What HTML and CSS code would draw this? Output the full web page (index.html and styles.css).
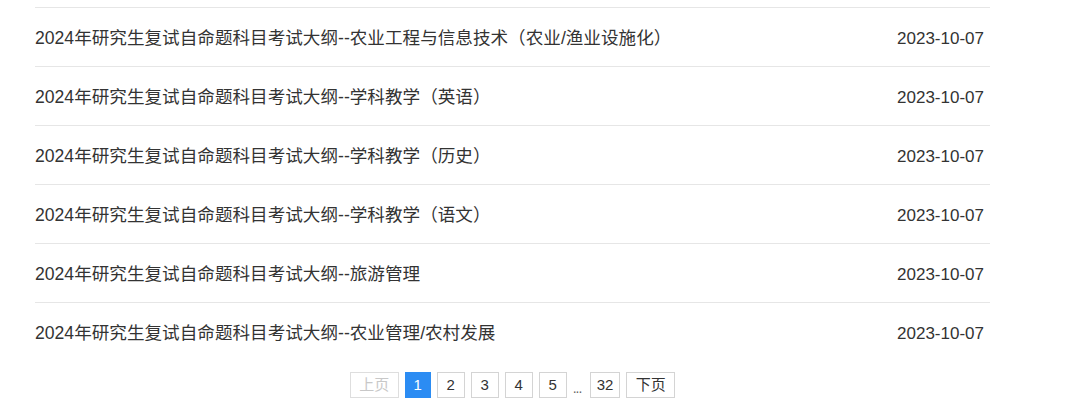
FILE: index.html
```html
<!DOCTYPE html>
<html lang="zh-CN">
<head>
<meta charset="utf-8">
<title>考试大纲</title>
<link rel="stylesheet" href="styles.css">
</head>
<body>
<div class="wrap">
  <ul class="news-list">
    <li class="news-item"><a class="news-title" href="#">2024年研究生复试自命题科目考试大纲--农业工程与信息技术（农业/渔业设施化）</a><span class="news-date">2023-10-07</span></li>
    <li class="news-item"><a class="news-title" href="#">2024年研究生复试自命题科目考试大纲--学科教学（英语）</a><span class="news-date">2023-10-07</span></li>
    <li class="news-item"><a class="news-title" href="#">2024年研究生复试自命题科目考试大纲--学科教学（历史）</a><span class="news-date">2023-10-07</span></li>
    <li class="news-item"><a class="news-title" href="#">2024年研究生复试自命题科目考试大纲--学科教学（语文）</a><span class="news-date">2023-10-07</span></li>
    <li class="news-item"><a class="news-title" href="#">2024年研究生复试自命题科目考试大纲--旅游管理</a><span class="news-date">2023-10-07</span></li>
    <li class="news-item"><a class="news-title" href="#">2024年研究生复试自命题科目考试大纲--农业管理/农村发展</a><span class="news-date">2023-10-07</span></li>
  </ul>
  <div class="pager">
    <span class="pg pg-text pg-disabled">上页</span>
    <span class="pg pg-num pg-active">1</span>
    <a class="pg pg-num" href="#">2</a>
    <a class="pg pg-num" href="#">3</a>
    <a class="pg pg-num" href="#">4</a>
    <a class="pg pg-num" href="#">5</a>
    <span class="pg-dots">...</span>
    <a class="pg pg-num" href="#">32</a>
    <a class="pg pg-text" href="#">下页</a>
  </div>
</div>
</body>
</html>
```

FILE: styles.css
```css
html, body {
  margin: 0;
  padding: 0;
  background: #fff;
}
body {
  font-family: "Liberation Sans", "Noto Sans CJK SC", sans-serif;
  color: #333;
  text-spacing-trim: space-all;
}
.wrap {
  width: 955px;
  margin-left: 35px;
  padding-top: 7px;
}
.news-list {
  list-style: none;
  margin: 0;
  padding: 0;
}
.news-item {
  display: flex;
  align-items: baseline;
  justify-content: space-between;
  box-sizing: border-box;
  height: 59px;
  padding-top: 2px;
  line-height: 56px;
  border-top: 1px solid #e6e6e6;
  font-size: 17px;
}
.news-title {
  color: #333;
  font-size: 17.6px;
  text-decoration: none;
}
.news-date {
  color: #333;
  padding-right: 6px;
}
.pager {
  display: flex;
  justify-content: center;
  align-items: center;
  gap: 6px;
  margin-top: 11px;
  font-size: 15px;
}
.pg {
  box-sizing: border-box;
  height: 26px;
  line-height: 24px;
  border: 1px solid #d4d4d4;
  color: #333;
  text-decoration: none;
  text-align: center;
}
.pg-num {
  min-width: 28px;
  padding: 0 6px;
}
.pg-text {
  min-width: 49px;
  padding: 0 8px;
}
.pg-disabled {
  color: #c8c8c8;
  border-color: #dedede;
}
.pg-active {
  min-width: 26px;
  background: #2b8cf3;
  border-color: #2b8cf3;
  color: #fff;
}
.pg-dots {
  width: 11px;
  font-size: 14px;
  line-height: 14px;
  color: #666;
  letter-spacing: -1px;
  padding-top: 6px;
}
```
